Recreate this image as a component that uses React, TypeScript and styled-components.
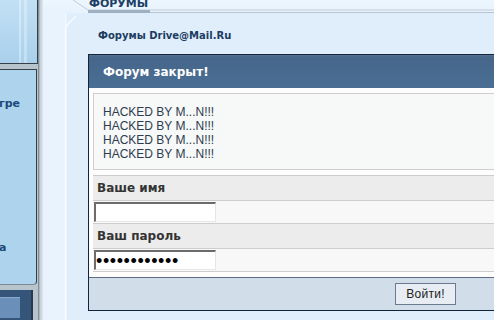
import React from "react";
import styled, { createGlobalStyle } from "styled-components";

const Global = createGlobalStyle`
  html, body { margin: 0; padding: 0; }
  body { width: 494px; height: 320px; overflow: hidden; background: #e2effc; font-family: "Liberation Sans", Arial, sans-serif; }
  #root { width: 494px; height: 320px; }
`;

const Page = styled.div`
  display: flex;
  width: 494px;
  height: 320px;
  overflow: hidden;
`;

const Sidebar = styled.div`
  width: 43px;
  flex: none;
  display: flex;
  flex-direction: column;
  background: linear-gradient(to right, #b8c4cc 0, #b8c4cc 38px, #6e7880 38px, #c4ccd4 40px, #dce8f2 43px);
`;

const TopBox = styled.div`
  height: 63px;
  width: 37px;
  border-right: 1px solid #36404a;
  border-bottom: 1px solid #36404a;
  background:
    linear-gradient(to right, transparent 0, transparent 19px, rgba(255,255,255,0.35) 19px, rgba(255,255,255,0.35) 21px, transparent 21px, transparent 24px, rgba(255,255,255,0.3) 24px, rgba(255,255,255,0.3) 27px, transparent 27px),
    linear-gradient(to bottom, #c2e0f4, #a9d0ec);
`;

const SideBox = styled.div`
  margin-top: 5px;
  height: 216px;
  width: 37px;
  border-right: 1px solid #36404a;
  border-top: 1px solid #36404a;
  border-bottom: 1px solid #7c8a96;
  border-bottom-right-radius: 4px;
  background: #add3ed;
  display: flex;
  flex-direction: column;
  justify-content: space-between;
  padding: 27px 0 30px;
  box-sizing: border-box;
  overflow: hidden;
`;

const SideLink = styled.div<{ $shift: number }>`
  font: bold 11px "DejaVu Sans", Verdana, sans-serif;
  color: #1c4a78;
  white-space: nowrap;
  margin-left: ${(p) => p.$shift}px;
`;

const BottomBar = styled.div`
  margin-top: 5px;
  flex: 1;
  width: 33px;
  border-right: 2px solid #2a3a4c;
  background: #34547a;
  display: flex;
  align-items: flex-end;
  padding-bottom: 2px;
  box-sizing: border-box;
`;

const BottomInner = styled.div`
  width: 20px;
  height: 20px;
  background: #6a90ba;
  border-top: 1px solid #88aacc;
`;

const Main = styled.div`
  position: relative;
  flex: 1;
  display: flex;
  flex-direction: column;
  overflow: hidden;
  background: linear-gradient(to right, #e8f3fd 0, #e8f3fd 22px, #f2f8fe 22px, #f2f8fe 23px, #e0eefc 24px);
`;

const Decor = styled.svg`
  position: absolute;
  left: 0;
  top: 0;
  pointer-events: none;
`;

const TabRow = styled.div`
  height: 13px;
  padding-left: 45px;
  display: flex;
  align-items: flex-end;
  background: linear-gradient(to bottom, #edf6fe, #e6f2fd);
`;

const TabLabel = styled.div`
  position: relative;
  font: bold 11px "DejaVu Sans", Verdana, sans-serif;
  color: #1c3e66;
  line-height: 9px;
  height: 13px;
  padding: 0 2px 2px 1px;
  border-bottom: 3px solid #9fb0c0;
  box-sizing: border-box;
  display: flex;
  align-items: flex-end;
  z-index: 1;
`;

const SiteTitle = styled.div`
  margin: 16px 0 0 55px;
  font: bold 10px "DejaVu Sans", Verdana, sans-serif;
  color: #1c3c62;
  line-height: 13px;
  height: 25px;
`;

const Panel = styled.div`
  margin-left: 45px;
  width: 430px;
  border: 1px solid #14243a;
  background: #fdfdfd;
  display: flex;
  flex-direction: column;
`;

const PanelHeader = styled.div`
  height: 33px;
  background: linear-gradient(to bottom, #56728e 0, #46668a 2px, #4a6e94 100%);
  color: #ffffff;
  font: bold 12px "DejaVu Sans", Verdana, sans-serif;
  display: flex;
  align-items: center;
  padding-left: 14px;
`;

const PanelBody = styled.div`
  padding: 5px 0 5px 4px;
  display: flex;
  flex-direction: column;
`;

const Message = styled.div`
  border: 1px solid #cfcfcf;
  border-right: none;
  background: #f7f8f8;
  height: 77px;
  padding: 11px 0 0 9px;
  box-sizing: border-box;
  font: 12px "Liberation Sans", Arial, sans-serif;
  line-height: 14px;
  color: #2c3c4e;
  margin-bottom: 5px;
`;

const Row = styled.div<{ $label?: boolean }>`
  height: ${(p) => (p.$label ? 25 : 23)}px;
  border-top: 1px solid #cdcdcd;
  background: ${(p) => (p.$label ? "#ececec" : "#f8f8f8")};
  display: flex;
  align-items: center;
  box-sizing: border-box;
  padding-left: ${(p) => (p.$label ? 4 : 1)}px;
  font: bold 12px "DejaVu Sans", Verdana, sans-serif;
  color: #333;
  &:last-child { border-bottom: 1px solid #cdcdcd; height: 24px; }
`;

const Input = styled.div`
  width: 122px;
  height: 20px;
  box-sizing: border-box;
  background: #fff;
  border-top: 2px solid #6c6c6c;
  border-left: 2px solid #6c6c6c;
  border-right: 1px solid #e6e6e6;
  border-bottom: 1px solid #e6e6e6;
  font: 18px "Liberation Sans", Arial, sans-serif;
  color: #000;
  display: flex;
  align-items: center;
  padding-left: 0px;
  letter-spacing: 0.6px;
  line-height: 1;
  overflow: hidden;
`;

const Footer = styled.div`
  height: 33px;
  border-top: 1px solid #5c6c82;
  background: #d1dde9;
  display: flex;
  align-items: center;
  padding-left: 306px;
  box-sizing: border-box;
`;

const Button = styled.div`
  width: 61px;
  height: 22px;
  box-sizing: border-box;
  border: 1px solid #6a7a92;
  background: #e8edf4;
  font: 12px "Liberation Sans", Arial, sans-serif;
  color: #222;
  display: flex;
  align-items: center;
  justify-content: center;
  letter-spacing: 0.3px;
`;

export default function App() {
  const hacked = Array.from({ length: 4 }, (_, i) => <div key={i}>HACKED BY M...N!!!</div>);
  return (
    <>
      <Global />
      <Page>
        <Sidebar>
          <TopBox />
          <SideBox>
            <SideLink $shift={-1}>гре</SideLink>
            <SideLink $shift={-1}>а</SideLink>
          </SideBox>
          <BottomBar>
            <BottomInner />
          </BottomBar>
        </Sidebar>
        <Main>
          <Decor width="452" height="320" viewBox="0 0 452 320">
            <polyline points="30,0 45,10 452,10" fill="none" stroke="#c0ccd8" strokeWidth="1" />
            <line x1="45" y1="12.5" x2="452" y2="12.5" stroke="#b8c4d0" strokeWidth="1" />
            <polyline points="22.5,320 22.5,27 33,16" fill="none" stroke="#f6fbff" strokeWidth="1.5" />
          </Decor>
          <TabRow>
            <TabLabel>ФОРУМЫ</TabLabel>
          </TabRow>
          <SiteTitle>Форумы Drive@Mail.Ru</SiteTitle>
          <Panel>
            <PanelHeader>Форум закрыт!</PanelHeader>
            <PanelBody>
              <Message>{hacked}</Message>
              <Row $label>Ваше имя</Row>
              <Row>
                <Input />
              </Row>
              <Row $label>Ваш пароль</Row>
              <Row>
                <Input>••••••••••••</Input>
              </Row>
            </PanelBody>
            <Footer>
              <Button>Войти!</Button>
            </Footer>
          </Panel>
        </Main>
      </Page>
    </>
  );
}
